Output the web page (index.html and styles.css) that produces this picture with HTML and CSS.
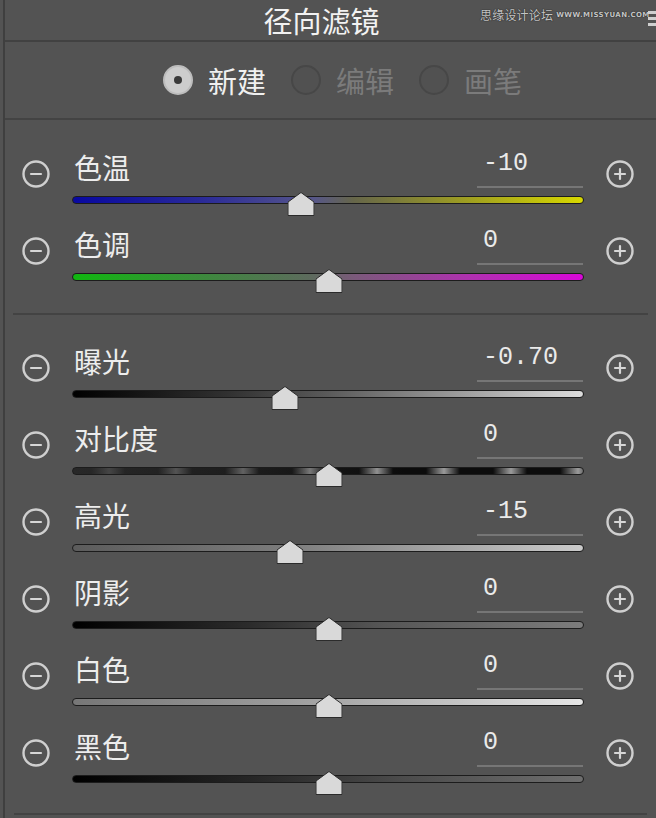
FILE: index.html
```html
<!DOCTYPE html>
<html lang="zh-CN">
<head>
<meta charset="utf-8">
<title>径向滤镜</title>
<link rel="stylesheet" href="styles.css">
</head>
<body>
<div class="panel">
  <header class="title-bar">
    <h1 class="title">径向滤镜</h1>
    <div class="watermark"><span class="wm-cn">思缘设计论坛</span><span class="wm-en">WWW.MISSYUAN.COM</span></div>
    <div class="menu"><i></i><i></i><i></i></div>
  </header>

  <div class="mode-row">
    <div class="mode active"><span class="radio"></span><span class="mode-text">新建</span></div>
    <div class="mode"><span class="radio"></span><span class="mode-text">编辑</span></div>
    <div class="mode"><span class="radio"></span><span class="mode-text">画笔</span></div>
  </div>

  <section class="group group-color">
    <div class="row">
      <span class="step"><svg width="30" height="30" viewBox="0 0 30 30"><circle cx="15" cy="15" r="12.5" class="ring"/><path d="M10 15h10" class="glyph"/></svg></span>
      <div class="main">
        <div class="head"><span class="label">色温</span><span class="value">-10</span></div>
        <div class="track t-temp"><span class="thumb" style="left:44.7%"><svg width="27" height="24" viewBox="0 0 27 24"><path d="M13.5 0.5L26.5 10V23.5H0.5V10Z"/></svg></span></div>
      </div>
      <span class="step"><svg width="30" height="30" viewBox="0 0 30 30"><circle cx="15" cy="15" r="12.5" class="ring"/><path d="M10 15h10M15 10v10" class="glyph"/></svg></span>
    </div>
    <div class="row">
      <span class="step"><svg width="30" height="30" viewBox="0 0 30 30"><circle cx="15" cy="15" r="12.5" class="ring"/><path d="M10 15h10" class="glyph"/></svg></span>
      <div class="main">
        <div class="head"><span class="label">色调</span><span class="value">0</span></div>
        <div class="track t-tint"><span class="thumb" style="left:50.2%"><svg width="27" height="24" viewBox="0 0 27 24"><path d="M13.5 0.5L26.5 10V23.5H0.5V10Z"/></svg></span></div>
      </div>
      <span class="step"><svg width="30" height="30" viewBox="0 0 30 30"><circle cx="15" cy="15" r="12.5" class="ring"/><path d="M10 15h10M15 10v10" class="glyph"/></svg></span>
    </div>
  </section>

  <div class="sep"></div>

  <section class="group group-tone">
    <div class="row">
      <span class="step"><svg width="30" height="30" viewBox="0 0 30 30"><circle cx="15" cy="15" r="12.5" class="ring"/><path d="M10 15h10" class="glyph"/></svg></span>
      <div class="main">
        <div class="head"><span class="label">曝光</span><span class="value">-0.70</span></div>
        <div class="track t-exposure"><span class="thumb" style="left:41.6%"><svg width="27" height="24" viewBox="0 0 27 24"><path d="M13.5 0.5L26.5 10V23.5H0.5V10Z"/></svg></span></div>
      </div>
      <span class="step"><svg width="30" height="30" viewBox="0 0 30 30"><circle cx="15" cy="15" r="12.5" class="ring"/><path d="M10 15h10M15 10v10" class="glyph"/></svg></span>
    </div>
    <div class="row">
      <span class="step"><svg width="30" height="30" viewBox="0 0 30 30"><circle cx="15" cy="15" r="12.5" class="ring"/><path d="M10 15h10" class="glyph"/></svg></span>
      <div class="main">
        <div class="head"><span class="label">对比度</span><span class="value">0</span></div>
        <div class="track t-contrast"><span class="thumb" style="left:50.2%"><svg width="27" height="24" viewBox="0 0 27 24"><path d="M13.5 0.5L26.5 10V23.5H0.5V10Z"/></svg></span></div>
      </div>
      <span class="step"><svg width="30" height="30" viewBox="0 0 30 30"><circle cx="15" cy="15" r="12.5" class="ring"/><path d="M10 15h10M15 10v10" class="glyph"/></svg></span>
    </div>
    <div class="row">
      <span class="step"><svg width="30" height="30" viewBox="0 0 30 30"><circle cx="15" cy="15" r="12.5" class="ring"/><path d="M10 15h10" class="glyph"/></svg></span>
      <div class="main">
        <div class="head"><span class="label">高光</span><span class="value">-15</span></div>
        <div class="track t-highlight"><span class="thumb" style="left:42.6%"><svg width="27" height="24" viewBox="0 0 27 24"><path d="M13.5 0.5L26.5 10V23.5H0.5V10Z"/></svg></span></div>
      </div>
      <span class="step"><svg width="30" height="30" viewBox="0 0 30 30"><circle cx="15" cy="15" r="12.5" class="ring"/><path d="M10 15h10M15 10v10" class="glyph"/></svg></span>
    </div>
    <div class="row">
      <span class="step"><svg width="30" height="30" viewBox="0 0 30 30"><circle cx="15" cy="15" r="12.5" class="ring"/><path d="M10 15h10" class="glyph"/></svg></span>
      <div class="main">
        <div class="head"><span class="label">阴影</span><span class="value">0</span></div>
        <div class="track t-shadow"><span class="thumb" style="left:50.2%"><svg width="27" height="24" viewBox="0 0 27 24"><path d="M13.5 0.5L26.5 10V23.5H0.5V10Z"/></svg></span></div>
      </div>
      <span class="step"><svg width="30" height="30" viewBox="0 0 30 30"><circle cx="15" cy="15" r="12.5" class="ring"/><path d="M10 15h10M15 10v10" class="glyph"/></svg></span>
    </div>
    <div class="row">
      <span class="step"><svg width="30" height="30" viewBox="0 0 30 30"><circle cx="15" cy="15" r="12.5" class="ring"/><path d="M10 15h10" class="glyph"/></svg></span>
      <div class="main">
        <div class="head"><span class="label">白色</span><span class="value">0</span></div>
        <div class="track t-white"><span class="thumb" style="left:50.2%"><svg width="27" height="24" viewBox="0 0 27 24"><path d="M13.5 0.5L26.5 10V23.5H0.5V10Z"/></svg></span></div>
      </div>
      <span class="step"><svg width="30" height="30" viewBox="0 0 30 30"><circle cx="15" cy="15" r="12.5" class="ring"/><path d="M10 15h10M15 10v10" class="glyph"/></svg></span>
    </div>
    <div class="row">
      <span class="step"><svg width="30" height="30" viewBox="0 0 30 30"><circle cx="15" cy="15" r="12.5" class="ring"/><path d="M10 15h10" class="glyph"/></svg></span>
      <div class="main">
        <div class="head"><span class="label">黑色</span><span class="value">0</span></div>
        <div class="track t-black"><span class="thumb" style="left:50.2%"><svg width="27" height="24" viewBox="0 0 27 24"><path d="M13.5 0.5L26.5 10V23.5H0.5V10Z"/></svg></span></div>
      </div>
      <span class="step"><svg width="30" height="30" viewBox="0 0 30 30"><circle cx="15" cy="15" r="12.5" class="ring"/><path d="M10 15h10M15 10v10" class="glyph"/></svg></span>
    </div>
  </section>

  <div class="sep sep-bottom"></div>
</div>
</body>
</html>
```
FILE: styles.css
```css
* { box-sizing: border-box; }

html, body {
  margin: 0;
  padding: 0;
  background: #535353;
}

body {
  width: 656px;
  height: 818px;
  overflow: hidden;
  font-family: "Noto Sans CJK SC", "Noto Sans", sans-serif;
  color: #ececec;
}

.panel {
  margin-left: 3px;
  border-left: 2px solid #3f3f3f;
  height: 818px;
}

/* header */
.title-bar {
  position: relative;
  height: 42px;
  border-bottom: 2px solid #414141;
  padding-right: 18px;
}

.title {
  margin: 0;
  text-align: center;
  font-size: 29px;
  font-weight: 400;
  line-height: 40px;
  color: #f2f2f2;
}

.watermark {
  position: absolute;
  top: 6px;
  left: 475px;
  display: flex;
  align-items: center;
  gap: 3px;
  white-space: nowrap;
  color: #c4c4c4;
  text-shadow: 0 0 1px #222, 0 0 1px #222;
}

.wm-cn {
  font-size: 12px;
  line-height: 18px;
  letter-spacing: 0.2px;
}

.wm-en {
  font-family: "DejaVu Sans", sans-serif;
  font-size: 7px;
  font-weight: 700;
  letter-spacing: 0.4px;
}

.menu {
  position: absolute;
  top: 11px;
  right: 0;
  width: 8px;
  display: flex;
  flex-direction: column;
  gap: 3px;
}

.menu i {
  display: block;
  height: 3px;
  background: #cfcfcf;
}

/* mode row */
.mode-row {
  height: 78px;
  border-bottom: 2px solid #434343;
  display: flex;
  align-items: center;
  padding-left: 158px;
  gap: 25px;
}

.mode {
  display: flex;
  align-items: center;
  gap: 15px;
}

.radio {
  width: 30px;
  height: 30px;
  border-radius: 50%;
  border: 2px solid #474747;
  background: #515151;
  display: flex;
  align-items: center;
  justify-content: center;
}

.mode.active .radio {
  background: #cdcdcd;
  border-color: #bdbdbd;
}

.mode.active .radio::after {
  content: "";
  width: 8px;
  height: 8px;
  border-radius: 50%;
  background: #3a3a3a;
}

.mode-text {
  font-size: 29px;
  line-height: 36px;
  color: #7b7b7b;
}

.mode.active .mode-text {
  color: #f0f0f0;
}

/* groups */
.group-color {
  padding-top: 22px;
  padding-bottom: 17px;
}

.group-tone {
  padding-top: 21px;
  padding-bottom: 15px;
}

.sep {
  height: 2px;
  margin: 0 8px 0 8px;
  background: #434343;
}

.sep-bottom {
  margin: 0 9px 0 9px;
}

.row {
  display: grid;
  grid-template-columns: 30px 512px 30px;
  column-gap: 21px;
  padding-left: 16px;
  height: 77px;
  align-items: start;
}

.step {
  margin-top: 17px;
  width: 30px;
  height: 30px;
  display: block;
}

.step svg { display: block; }

.ring {
  fill: none;
  stroke: #cfcfcf;
  stroke-width: 2.4;
}

.glyph {
  fill: none;
  stroke: #d6d6d6;
  stroke-width: 2.2;
  stroke-linecap: round;
}

.main {
  display: flex;
  flex-direction: column;
}

.head {
  height: 46px;
  display: flex;
  justify-content: space-between;
}

.label {
  padding-top: 7px;
  padding-left: 2px;
  font-size: 28px;
  line-height: 36px;
  color: #ededed;
}

.value {
  width: 106px;
  height: 46px;
  margin-right: 1px;
  padding: 7px 0 0 6px;
  border-bottom: 2px solid #767676;
  font-family: "Liberation Mono", "DejaVu Sans Mono", monospace;
  font-size: 25px;
  line-height: 30px;
  color: #eaeaea;
}

.track {
  position: relative;
  margin-top: 8px;
  height: 8px;
  border-radius: 4px;
  border: 1px solid #1c1c1c;
}

.thumb {
  position: absolute;
  top: -5px;
  width: 27px;
  height: 24px;
  transform: translateX(-50%);
}

.thumb svg {
  display: block;
}

.thumb path {
  fill: #d9d9d9;
  stroke: #2b2b2b;
  stroke-width: 1;
}

.t-temp {
  background: linear-gradient(to right, #0808a0 0%, #2a2a98 25%, #56568a 47%, #66664a 55%, #a0a020 78%, #d8d800 100%);
}

.t-tint {
  background: linear-gradient(to right, #10b810 0%, #3c8a3c 25%, #5e6a5e 47%, #7a5a7a 55%, #b030b0 78%, #d808d8 100%);
}

.t-exposure {
  background: linear-gradient(to right, #000 0%, #303030 30%, #5a5a5a 50%, #9a9a9a 75%, #dcdcdc 100%);
}

.t-contrast {
  background:
    linear-gradient(to right, rgba(45,45,45,0.85) 0%, rgba(45,45,45,0.5) 35%, rgba(45,45,45,0) 65%),
    repeating-linear-gradient(to right, #0c0c0c 0px, #0c0c0c 18px, #9a9a9a 36px, #0c0c0c 52px, #0c0c0c 67px);
}

.t-highlight {
  background: linear-gradient(to right, #5c5c5c 0%, #7a7a7a 40%, #a8a8a8 75%, #cacaca 100%);
}

.t-shadow {
  background: linear-gradient(to right, #000 0%, #2c2c2c 35%, #555 60%, #7c7c7c 100%);
}

.t-white {
  background: linear-gradient(to right, #777 0%, #9a9a9a 40%, #c4c4c4 75%, #e6e6e6 100%);
}

.t-black {
  background: linear-gradient(to right, #000 0%, #262626 35%, #4c4c4c 65%, #6e6e6e 100%);
}
```
